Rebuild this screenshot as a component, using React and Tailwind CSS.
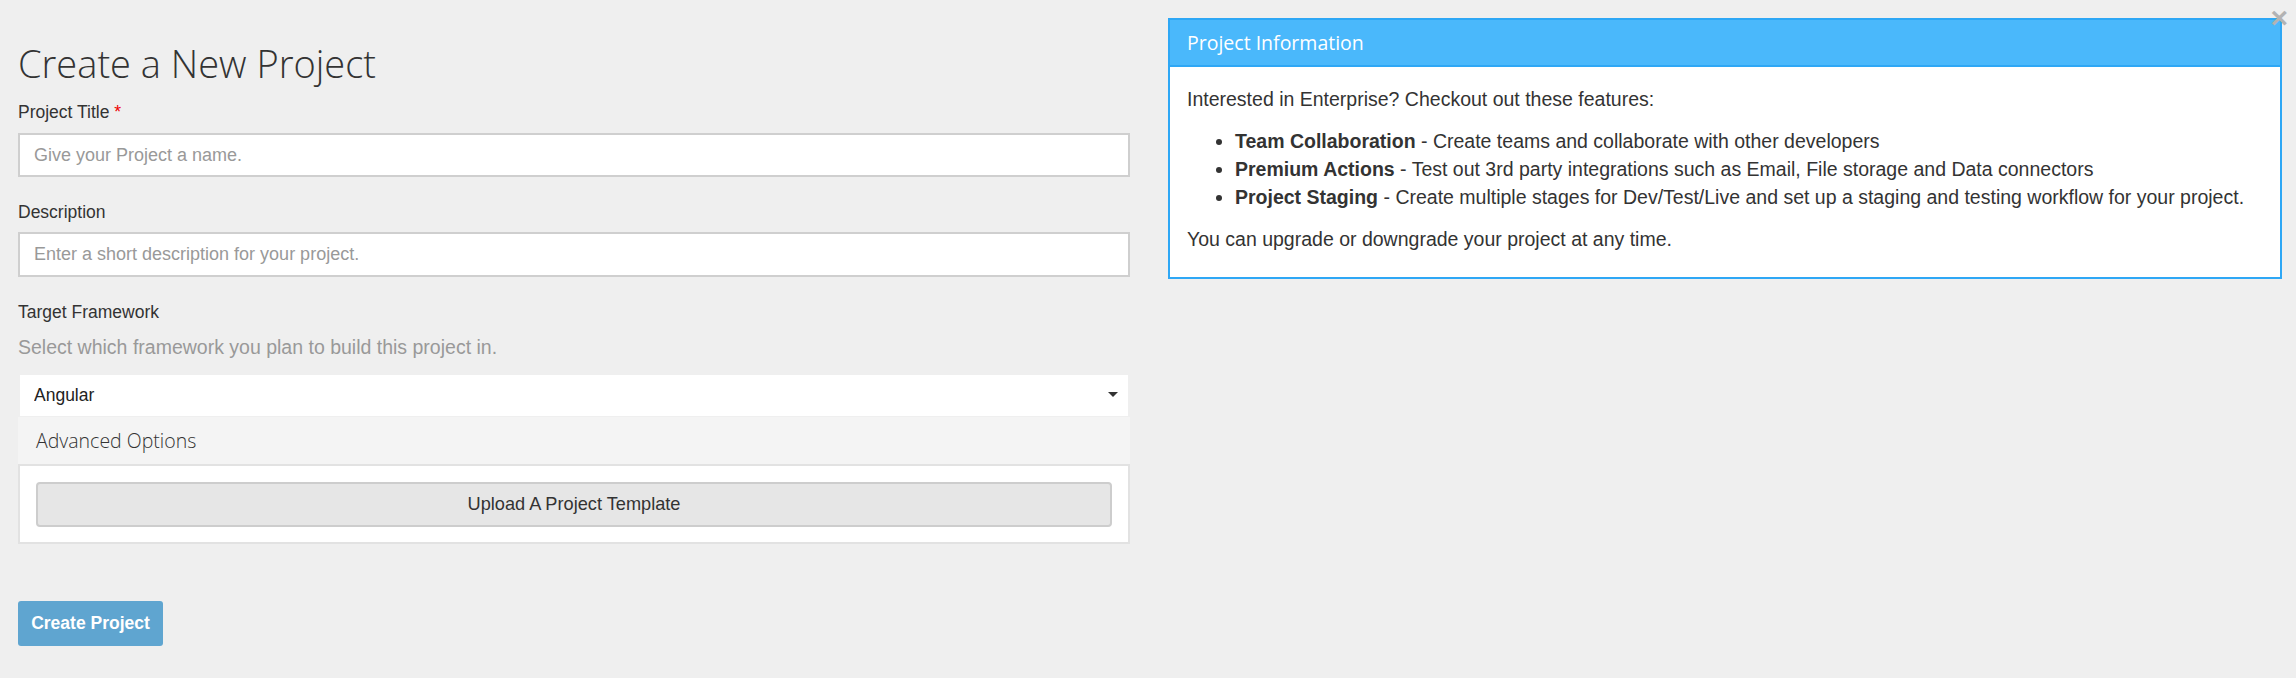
import { useState } from "react";

const features = [
  {
    title: "Team Collaboration",
    text: "Create teams and collaborate with other developers",
  },
  {
    title: "Premium Actions",
    text: "Test out 3rd party integrations such as Email, File storage and Data connectors",
  },
  {
    title: "Project Staging",
    text: "Create multiple stages for Dev/Test/Live and set up a staging and testing workflow for your project.",
  },
];

const sans = "font-['Liberation_Sans',Arial,sans-serif]";
const open = "font-['Open_Sans',sans-serif]";

const App = () => {
  const [framework, setFramework] = useState("Angular");

  return (
    <div className={`min-h-[678px] w-full bg-[#efefef] text-[#333] ${sans} relative`}>
      <div className="grid grid-cols-2">
        {/* Left: form */}
        <div className="px-[18px]">
          <h1 className={`${open} font-light text-[38px] leading-[42px] mt-[42px] text-[#333]`}>
            Create a New Project
          </h1>

          <div className="mt-[16px]">
            <label className="block text-[17.5px] leading-[24px] mb-[9px]">
              Project Title <span className="text-[#e00]">*</span>
            </label>
            <input
              className="block w-full h-[44px] bg-white border-2 border-[#cfcfcf] px-[14px] text-[18px] placeholder:text-[#999] outline-none"
              placeholder="Give your Project a name."
            />
          </div>

          <div className="mt-[23px]">
            <label className="block text-[17.5px] leading-[24px] mb-[8px]">Description</label>
            <input
              className="block w-full h-[45px] bg-white border-2 border-[#cfcfcf] px-[14px] text-[18px] placeholder:text-[#999] outline-none"
              placeholder="Enter a short description for your project."
            />
          </div>

          <div className="mt-[23px]">
            <label className="block text-[17.5px] leading-[24px]">Target Framework</label>
            <p className="text-[19.5px] leading-[28px] text-[#999] mt-[9px]">
              Select which framework you plan to build this project in.
            </p>
            <div className="relative mt-[14px] mx-[2px] h-[41px] bg-white">
              <select
                value={framework}
                onChange={(e) => setFramework(e.target.value)}
                className="appearance-none w-full h-full bg-transparent px-[14px] text-[17.5px] text-[#222] outline-none"
              >
                <option>Angular</option>
                <option>React</option>
                <option>Vue</option>
              </select>
              <span className="pointer-events-none absolute right-[10px] top-[17px] w-0 h-0 border-l-[5px] border-r-[5px] border-t-[5px] border-l-transparent border-r-transparent border-t-[#333]" />
            </div>
          </div>

          {/* Advanced options */}
          <div className="mt-[1px]">
            <div className={`${open} h-[47px] bg-[#f4f4f4] flex items-center px-[18px] text-[19.5px] font-light text-[#333]`}>
              Advanced Options
            </div>
            <div className="bg-white border-2 border-[#e2e2e2] px-[16px] pt-[16px] pb-[15px]">
              <button className="w-full h-[45px] bg-[#e6e6e6] border-2 border-[#cdcdcd] rounded-[4px] text-[18.2px] text-[#333]">
                Upload A Project Template
              </button>
            </div>
          </div>

          <button className="mt-[57px] h-[45px] w-[145px] bg-[#5fa5d0] rounded-[3px] text-white text-[17.5px] font-bold">
            Create Project
          </button>
        </div>

        {/* Right: info panel */}
        <div className="px-[18px] pt-[18px]">
          <div className="border-2 border-[#2ea7f5] bg-white ml-[2px] mr-[-4px]">
            <div className={`${open} h-[47px] bg-[#4ab8fb] border-b-2 border-[#2ea7f5] flex items-center px-[17px] text-white text-[19.5px]`}>
              Project Information
            </div>
            <div className="px-[17px] pt-[18px] pb-[24px] text-[19.5px] leading-[28px] text-[#333]">
              <p className="mb-[14px]">Interested in Enterprise? Checkout out these features:</p>
              <ul className="list-disc pl-[48px] mb-[14px]">
                {features.map((f, i) => (
                  <li key={i}>
                    <b>{f.title}</b> - {f.text}
                  </li>
                ))}
              </ul>
              <p>You can upgrade or downgrade your project at any time.</p>
            </div>
          </div>
        </div>
      </div>

      <span className="absolute right-[8px] top-[3px] text-[30px] leading-[30px] font-bold text-[#b3b3b3]">
        ×
      </span>
    </div>
  );
};

export default App;
